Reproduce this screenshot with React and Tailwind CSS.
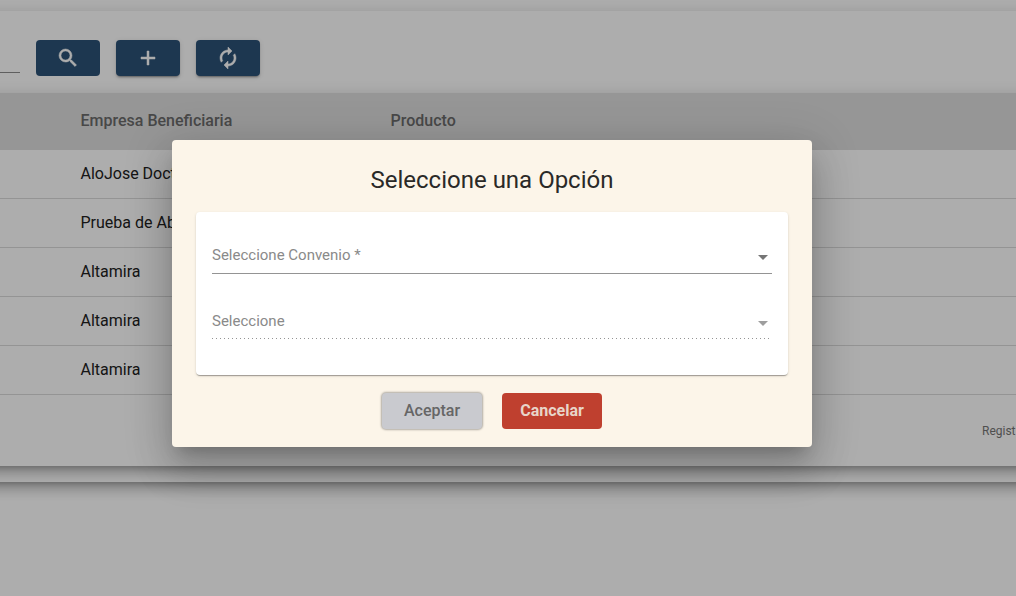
import { MdArrowDropDown } from "react-icons/md";

const companies = ["AloJose Doctor", "Prueba de Abono", "Altamira", "Altamira", "Altamira"];
const icons = {
  search:
    "M15.5 14h-.79l-.28-.27A6.471 6.471 0 0 0 16 9.5 6.5 6.5 0 1 0 9.5 16c1.61 0 3.09-.59 4.23-1.57l.27.28v.79l5 4.99L20.49 19l-4.99-5zm-6 0C7.01 14 5 11.99 5 9.5S7.01 5 9.5 5 14 7.01 14 9.5 11.99 14 9.5 14z",
  add: "M19 13h-6v6h-2v-6H5v-2h6V5h2v6h6v2z",
  autorenew:
    "M12 6v3l4-4-4-4v3c-4.42 0-8 3.58-8 8 0 1.57.46 3.03 1.24 4.26L6.7 14.8A5.87 5.87 0 0 1 6 12c0-3.31 2.69-6 6-6zm6.76 1.74L17.3 9.2c.44.84.7 1.79.7 2.8 0 3.31-2.69 6-6 6v-3l-4 4 4 4v-3c4.42 0 8-3.58 8-8 0-1.57-.46-3.03-1.24-4.26z",
};
const cardShadow =
  "shadow-[0_5px_5px_-3px_rgba(0,0,0,0.2),0_8px_10px_1px_rgba(0,0,0,0.14),0_3px_14px_2px_rgba(0,0,0,0.12)]";
const raised =
  "shadow-[0_3px_1px_-2px_rgba(0,0,0,0.2),0_2px_2px_0_rgba(0,0,0,0.14),0_1px_5px_0_rgba(0,0,0,0.12)]";

function ToolButton({ icon, label, flat }) {
  return (
    <button
      aria-label={label}
      className={`flex h-9 w-16 items-center justify-center rounded bg-[#2c5276] text-white ${flat ? "" : raised}`}
    >
      <svg viewBox="0 0 24 24" className="size-6 fill-current stroke-current stroke-[0.5]">
        <path d={icons[icon]} />
      </svg>
    </button>
  );
}

function SelectField({ label, disabled }) {
  return (
    <div
      className={`flex h-[37px] items-start justify-between border-b ${
        disabled ? "border-transparent" : "border-[#949494]"
      }`}
    >
      <span className="text-[15px] leading-9 text-[#8a8a8a]">{label}</span>
      <MdArrowDropDown className={`mt-2 -mr-[3px] size-6 ${disabled ? "text-[#9e9e9e]" : "text-[#757575]"}`} />
    </div>
  );
}

export default function App() {
  return (
    <div className="relative h-[596px] w-[1016px] overflow-hidden bg-white pt-[11px] font-['Roboto',sans-serif]">
      <section className={`-mx-8 h-[471px] ${cardShadow}`}>
        <div className="flex h-[82px] items-start gap-4 px-8 pt-[29px]">
          <div className="h-[33px] w-5 border-b border-[#8c8c8c]" />
          <ToolButton icon="search" label="Buscar" flat />
          <ToolButton icon="add" label="Agregar" />
          <ToolButton icon="autorenew" label="Actualizar" />
        </div>
        <div className={`h-[373px] bg-white px-8 ${cardShadow}`}>
          <div className="-mx-8 flex h-[57px] items-center bg-[#dedede] pb-px pl-[112.5px] text-base font-medium text-[#6b6b6b]">
            <span className="w-[310px]">Empresa Beneficiaria</span>
            <span>Producto</span>
          </div>
          {companies.map((name, i) => (
            <div key={i} className="flex h-[49px] items-center border-b border-[#dadada] pl-[80.5px] text-base text-[#212121]">
              {name}
            </div>
          ))}
          <div className="flex h-[71px] items-center justify-end text-xs text-[#757575]">
            <span className="w-[34px] whitespace-nowrap">Regist</span>
          </div>
        </div>
      </section>

      <div className="absolute inset-0 bg-black/32 pt-[140px] pl-[172px]">
        <div
          role="dialog"
          className="flex h-[307px] w-[640px] flex-col rounded bg-[#fcf5e9] px-6 shadow-[0_11px_15px_-7px_rgba(0,0,0,0.2),0_24px_38px_3px_rgba(0,0,0,0.14),0_9px_46px_8px_rgba(0,0,0,0.12)]"
        >
          <h1 className="h-[72px] pt-6 text-center text-2xl leading-8 text-[#2a2927]">Seleccione una Opción</h1>
          <div className="h-[163px] rounded bg-white px-4 pt-[25px] shadow-[0_2px_1px_-1px_rgba(0,0,0,0.2),0_1px_1px_0_rgba(0,0,0,0.14),0_1px_3px_0_rgba(0,0,0,0.12)]">
            <SelectField label="Seleccione Convenio *" />
            <div className="h-[29px]" />
            <SelectField label="Seleccione" disabled />
            <div className="-mt-[2px] h-px bg-[repeating-linear-gradient(to_right,#949494_0_1px,transparent_1px_4px)]" />
          </div>
          <div className="flex items-center justify-center gap-5 pt-[18px]">
            <button className="h-9 w-[100px] rounded bg-[#c9cacf] text-base font-medium text-[#666] shadow-[0_0_2px_1px_rgba(0,0,0,0.3)]">
              Aceptar
            </button>
            <button className="h-9 w-[100px] rounded bg-[#bf402f] text-base font-bold text-[#e8d5c9]">Cancelar</button>
          </div>
        </div>
      </div>
    </div>
  );
}
